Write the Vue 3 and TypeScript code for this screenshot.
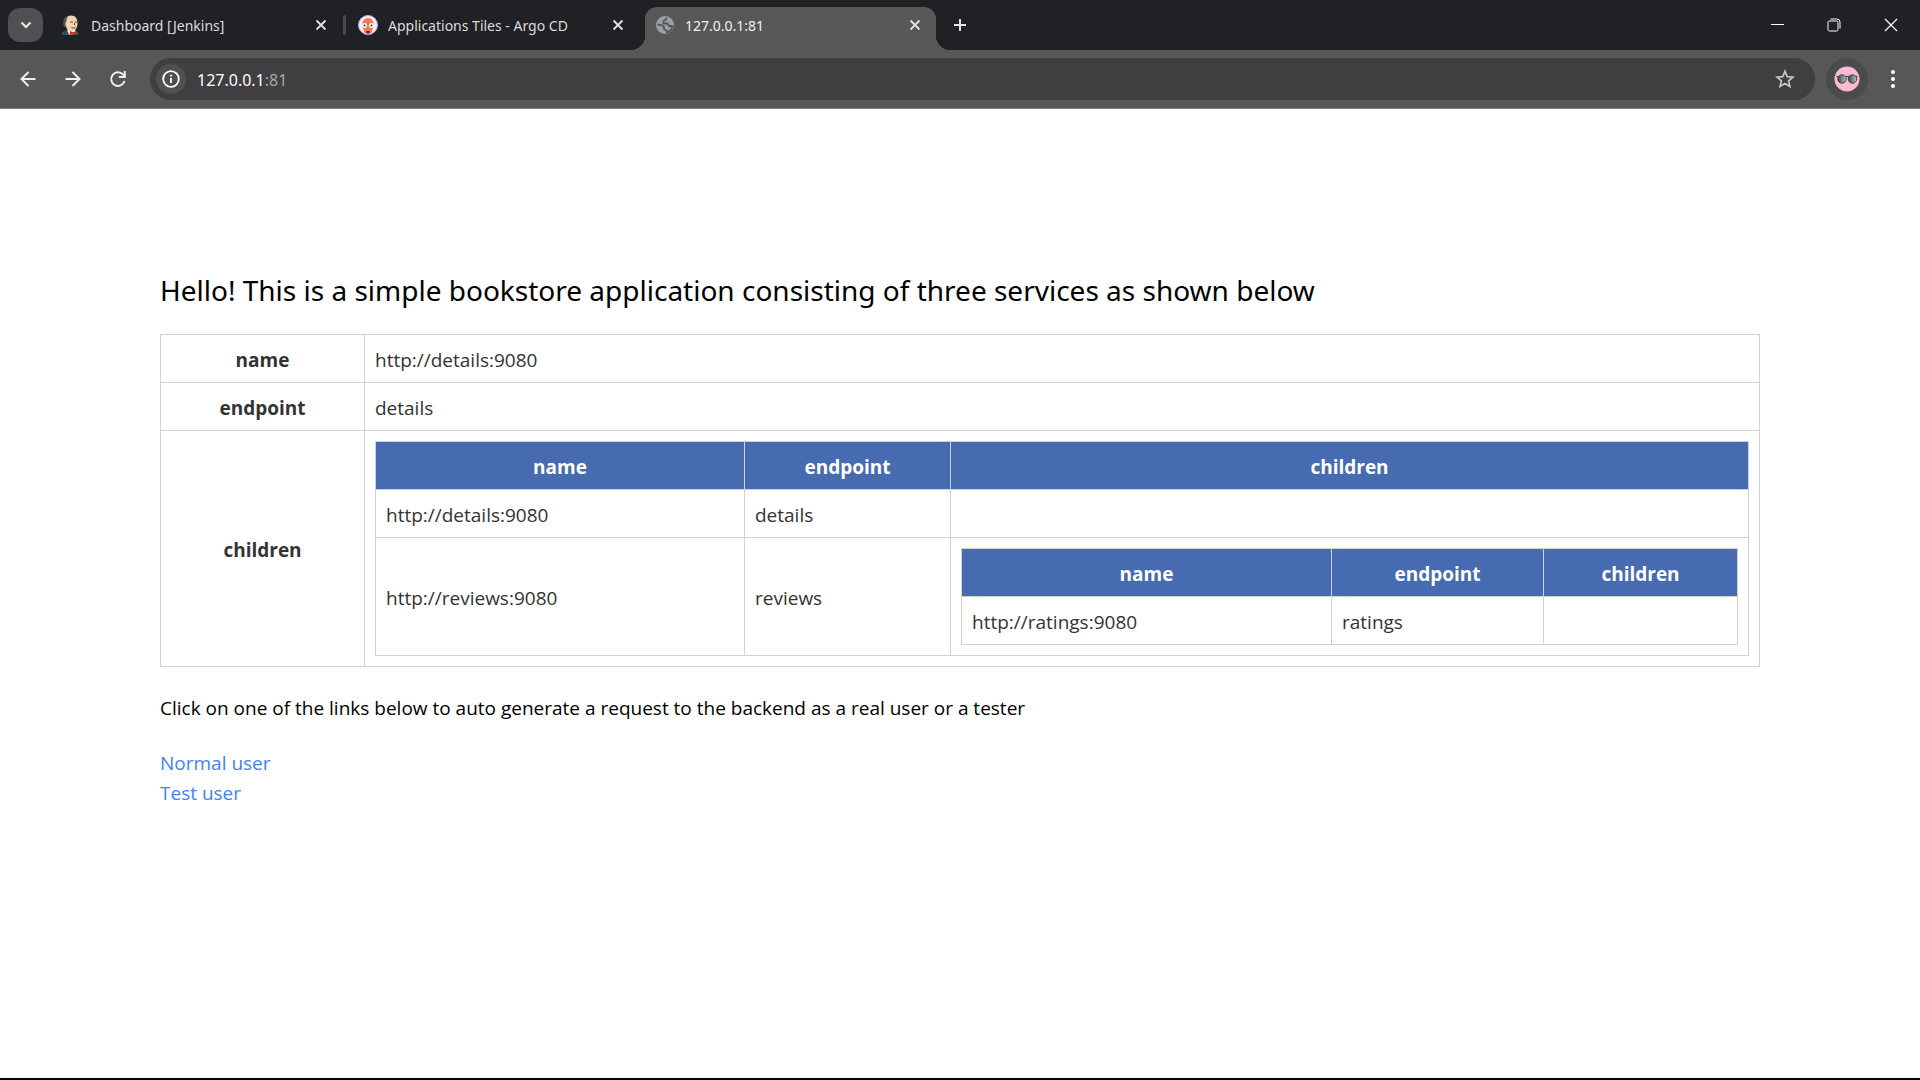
<script setup lang="ts">
interface Tab {
  title: string
  icon: 'jenkins' | 'argo' | 'globe'
  active: boolean
}

interface Service {
  name: string
  endpoint: string
  children: Service[]
}

const tabs: Tab[] = [
  { title: 'Dashboard [Jenkins]', icon: 'jenkins', active: false },
  { title: 'Applications Tiles - Argo CD', icon: 'argo', active: false },
  { title: '127.0.0.1:81', icon: 'globe', active: true },
]

const product: Service = {
  name: 'http://details:9080',
  endpoint: 'details',
  children: [
    { name: 'http://details:9080', endpoint: 'details', children: [] },
    {
      name: 'http://reviews:9080',
      endpoint: 'reviews',
      children: [{ name: 'http://ratings:9080', endpoint: 'ratings', children: [] }],
    },
  ],
}
</script>

<template>
  <div class="window">
    <header class="tabstrip">
      <button class="search-tabs" type="button" aria-label="Search tabs">
        <svg width="12" height="12" viewBox="0 0 12 12"><path d="M1.5 3.5 6 8l4.5-4.5" fill="none" stroke="#e8e8e8" stroke-width="2.2" /></svg>
      </button>
      <nav class="tabs">
        <div v-for="tab in tabs" :key="tab.title" class="tab" :class="{ active: tab.active }">
          <svg v-if="tab.icon === 'jenkins'" class="favicon" viewBox="0 0 20 20">
            <path d="M1 20v-2.500L5 15.500h10l2.500 2V20Z" fill="#335061" />
            <path d="M6 14.500h8l.5 3-3.500 2H8Z" fill="#f4f2ec" />
            <path d="M3 8c0-4.500 2.500-7.500 7-7.500s6.500 3 6.500 7.500c0 5-2 8-5.500 8s-5.500-2-6-4.500C3.500 11 3 10 3 8Z" fill="#efd3ae" />
            <path d="M7.500 1C4 1.500 2 4.500 2.200 8c0 1.500.6 3 1.500 4l1-1.500L4.500 8l1-2V4Z" fill="#5c5450" />
            <path d="M16 4.500c.8 1 1 2.500.8 4" fill="none" stroke="#5c5450" />
            <path d="M9.500 7h2.500m2 0h2M10.500 12.500c1.500.8 3 .8 4-.2M13.500 8v2" fill="none" stroke="#4a3a32" stroke-width="1" />
            <path d="m9 16 3 1.200 3.500-1.200v3.800L12 18.800 9 20Z" fill="#e02020" />
          </svg>
          <svg v-else-if="tab.icon === 'argo'" class="favicon" viewBox="0 0 20 20">
            <circle cx="10" cy="10" r="9.500" fill="#f3f0fa" stroke="#b9b1dc" />
            <path d="M4.200 9a5.800 6 0 0 1 11.600 0c0 3-1.200 4.500-1.500 6.500l-1 3H6.700l-1-3C5.400 13.500 4.200 12 4.200 9Z" fill="#ef7b4d" />
            <circle cx="6.500" cy="10.500" r="2.500" fill="#fff" />
            <circle cx="13.500" cy="10.500" r="2.500" fill="#fff" />
            <circle cx="6.500" cy="10.500" r=".9" fill="#222" />
            <circle cx="13.500" cy="10.500" r=".9" fill="#222" />
            <path d="M8.500 16h3l-.3 2.500H8.800Z" fill="#3a2a2a" />
          </svg>
          <svg v-else class="favicon" viewBox="0 0 20 20">
            <circle cx="10" cy="10" r="9" fill="#9aa0a6" />
            <path d="M11.500 2.500 11 4.500 8.500 6v2.500h4l1.500 2.500h3.500c-.5 3-2.500 5.500-5.700 6.500l.2-2.500M2.500 9.500l4 .5 2.500 2v2l2 1.500" fill="none" stroke="#575757" stroke-width="1.800" />
          </svg>
          <span class="tab-title">{{ tab.title }}</span>
          <button class="tab-close" type="button" aria-label="Close tab">
            <svg width="12" height="12" viewBox="0 0 12 12"><path d="m1.500 1.500 9 9m0-9-9 9" stroke="#e3e3e3" stroke-width="1.800" /></svg>
          </button>
        </div>
      </nav>
      <button class="new-tab" type="button" aria-label="New tab">
        <svg width="14" height="14" viewBox="0 0 14 14"><path d="M7 1v12M1 7h12" stroke="#e3e3e3" stroke-width="2" /></svg>
      </button>
      <div class="window-controls">
        <button type="button" aria-label="Minimize">
          <svg width="14" height="14" viewBox="0 0 14 14"><path d="M1 6.500h13" stroke="#fff" /></svg>
        </button>
        <button type="button" aria-label="Restore">
          <svg width="14" height="14" viewBox="0 0 14 14" fill="none" stroke="#fff"><rect x="1" y="3" width="10" height="10" rx="1.500" /><path d="M3.500 1H10a3 3 0 0 1 3 3v6.500" /></svg>
        </button>
        <button type="button" aria-label="Close">
          <svg width="14" height="14" viewBox="0 0 14 14"><path d="m1 1 12 12M13 1 1 13" stroke="#fff" stroke-width="1.200" /></svg>
        </button>
      </div>
    </header>

    <div class="toolbar">
      <button class="nav-button" type="button" aria-label="Back">
        <svg width="20" height="20" viewBox="0 0 20 20"><path d="M17.500 10H4M10.500 3l-7 7 7 7" fill="none" stroke="#eee" stroke-width="2" /></svg>
      </button>
      <button class="nav-button" type="button" aria-label="Forward">
        <svg width="20" height="20" viewBox="0 0 20 20"><path d="M2.500 10H16M9.500 3l7 7-7 7" fill="none" stroke="#eee" stroke-width="2" /></svg>
      </button>
      <button class="nav-button" type="button" aria-label="Reload">
        <svg width="20" height="20" viewBox="0 0 20 20"><path d="M16.500 12a6.800 6.800 0 1 1-1.300-6.300L17 8" fill="none" stroke="#eee" stroke-width="2" /><path d="M17.800 2v7h-7V7h5V2Z" fill="#eee" /></svg>
      </button>
      <div class="omnibox">
        <button class="site-info" type="button" aria-label="View site information">
          <svg width="18" height="18" viewBox="0 0 18 18"><circle cx="9" cy="9" r="7.800" fill="none" stroke="#fff" stroke-width="1.800" /><path d="M9 8v5M9 4.800v1.800" stroke="#fff" stroke-width="1.800" /></svg>
        </button>
        <a class="url" href="#">127.0.0.1<span class="port">:81</span></a>
        <button class="bookmark" type="button" aria-label="Bookmark this tab">
          <svg width="20" height="20" viewBox="0 0 20 20"><path d="m10 2.300 2.200 5.300 5.800.5-4.400 3.800 1.300 5.600-4.900-3-4.900 3 1.300-5.600L2 8.100l5.800-.5Z" fill="none" stroke="#c7c7c7" stroke-width="1.700" /></svg>
        </button>
      </div>
      <button class="profile" type="button" aria-label="Profile">
        <svg width="26" height="26" viewBox="0 0 26 26">
          <defs><linearGradient id="lens" x1="0" x2="1"><stop offset="0" stop-color="#33424a" /><stop offset="1" stop-color="#b9c6c9" /></linearGradient></defs>
          <circle cx="13" cy="13" r="12.500" fill="#f8bbd0" />
          <path d="M2.500 10.500h21" stroke="#4a4044" stroke-width="1.200" />
          <circle cx="8" cy="13" r="4.200" fill="url(#lens)" stroke="#4a4044" />
          <circle cx="18.500" cy="13" r="4.200" fill="url(#lens)" stroke="#4a4044" />
        </svg>
      </button>
      <button class="menu" type="button" aria-label="Menu">
        <svg width="6" height="20" viewBox="0 0 6 20" fill="#fff"><circle cx="3" cy="3" r="2" /><circle cx="3" cy="10" r="2" /><circle cx="3" cy="17" r="2" /></svg>
      </button>
    </div>

    <main class="page">
      <h1>Hello! This is a simple bookstore application consisting of three services as shown below</h1>

      <table class="services">
        <colgroup><col class="col-label" /><col /></colgroup>
        <tbody>
          <tr><th scope="row">name</th><td>{{ product.name }}</td></tr>
          <tr><th scope="row">endpoint</th><td>{{ product.endpoint }}</td></tr>
          <tr>
            <th scope="row">children</th>
            <td class="nested">
              <table>
                <colgroup><col class="col-name" /><col class="col-endpoint" /><col /></colgroup>
                <thead>
                  <tr><th scope="col">name</th><th scope="col">endpoint</th><th scope="col">children</th></tr>
                </thead>
                <tbody>
                  <tr v-for="child in product.children" :key="child.name">
                    <td>{{ child.name }}</td>
                    <td>{{ child.endpoint }}</td>
                    <td class="nested">
                      <table v-if="child.children.length">
                        <colgroup><col class="col-name-inner" /><col class="col-endpoint-inner" /><col /></colgroup>
                        <thead>
                          <tr><th scope="col">name</th><th scope="col">endpoint</th><th scope="col">children</th></tr>
                        </thead>
                        <tbody>
                          <tr v-for="leaf in child.children" :key="leaf.name">
                            <td>{{ leaf.name }}</td>
                            <td>{{ leaf.endpoint }}</td>
                            <td></td>
                          </tr>
                        </tbody>
                      </table>
                    </td>
                  </tr>
                </tbody>
              </table>
            </td>
          </tr>
        </tbody>
      </table>

      <p>Click on one of the links below to auto generate a request to the backend as a real user or a tester</p>
      <ul>
        <li><a href="#normal">Normal user</a></li>
        <li><a href="#test">Test user</a></li>
      </ul>
    </main>
  </div>
</template>

<style>
body {
  margin: 0;
}
</style>

<style scoped>
.window {
  box-sizing: border-box;
  display: flex;
  flex-direction: column;
  min-height: 100vh;
  border-bottom: 2px solid #000;
  background: #fff;
  color: #000;
  font-family: "Noto Sans", "Open Sans", sans-serif;
}

button {
  display: flex;
  align-items: center;
  justify-content: center;
  flex: none;
  padding: 0;
  border: 0;
  background: none;
}

.tabstrip {
  display: flex;
  align-items: center;
  height: 50px;
  padding: 0 1px 0 8px;
  background: #202124;
}

.search-tabs {
  width: 35px;
  height: 34px;
  border-radius: 12px;
  background: #524f52;
}

.tabs {
  display: flex;
  align-self: stretch;
  gap: 6px;
  margin-left: 8px;
}

.tab {
  position: relative;
  box-sizing: border-box;
  display: flex;
  align-items: center;
  width: 291px;
  height: 43px;
  margin-top: 7px;
  padding: 0 14px 7px 10px;
  border-radius: 12px 12px 0 0;
  color: #dcdcdc;
  font-size: 14px;
  line-height: 20px;
}

.tab:first-child::after {
  content: "";
  position: absolute;
  top: 8px;
  right: -4px;
  width: 3px;
  height: 20px;
  border-radius: 2px;
  background: #4c494c;
}

.tab.active {
  background: #575757;
  color: #f1f1f1;
}

.tab.active::before,
.tab.active::after {
  content: "";
  position: absolute;
  bottom: 0;
  width: 14px;
  height: 14px;
}

.tab.active::before {
  right: 100%;
  background: radial-gradient(circle at 0 0, transparent 14px, #575757 14px);
}

.tab.active::after {
  left: 100%;
  background: radial-gradient(circle at 100% 0, transparent 14px, #575757 14px);
}

.favicon {
  flex: none;
  width: 20px;
  height: 20px;
}

.tab-title {
  flex: 1;
  margin-left: 10px;
  padding-top: 2px;
  overflow: hidden;
  white-space: nowrap;
}

.tab-close {
  width: 14px;
  height: 20px;
}

.new-tab {
  width: 34px;
  height: 34px;
  margin-left: 7px;
}

.window-controls {
  display: flex;
  align-self: stretch;
  margin-left: auto;
}

.window-controls button {
  width: 57px;
}

.toolbar {
  box-sizing: border-box;
  display: flex;
  align-items: center;
  height: 59px;
  padding: 0 17px 0 5px;
  border-bottom: 1px solid #7d797d;
  background: #575757;
}

.nav-button {
  width: 45px;
  height: 42px;
}

.omnibox {
  box-sizing: border-box;
  display: flex;
  flex: 1;
  align-items: center;
  height: 42px;
  margin-left: 10px;
  padding: 0 20px 0 6px;
  border-radius: 21px;
  background: #413e41;
}

.site-info {
  width: 30px;
  height: 30px;
  border-radius: 50%;
  background: #524f52;
}

.url {
  flex: 1;
  margin-left: 11px;
  padding-top: 1px;
  color: #fff;
  font-size: 16px;
  line-height: 24px;
  text-decoration: none;
}

.port {
  color: #a3a7ab;
}

.profile {
  width: 42px;
  height: 42px;
  margin-left: 11px;
  border-radius: 50%;
  background: #4d4a4d;
}

.menu {
  width: 20px;
  height: 42px;
  margin-left: 15px;
}

.page {
  padding: 163px 160px 0;
  font-family: "Open Sans", "Noto Sans", sans-serif;
  font-size: 19px;
  line-height: 30px;
}

h1 {
  margin: 0 0 26px;
  font-family: "Noto Sans", "Open Sans", sans-serif;
  font-size: 28px;
  font-weight: 400;
  line-height: 36px;
}

table {
  width: 100%;
  border-collapse: collapse;
  table-layout: fixed;
  color: #333;
  line-height: 27px;
}

th,
td {
  padding: 12px 10px 8px;
  border: 1px solid #d1d1d1;
  text-align: left;
}

td.nested {
  padding: 10px;
}

th {
  font-weight: 700;
  text-align: center;
}

thead th {
  background: #466bb0;
  color: #fff;
}

.col-label {
  width: 204px;
}

.col-name {
  width: 369px;
}

.col-name-inner {
  width: 370px;
}

.col-endpoint {
  width: 206px;
}

.col-endpoint-inner {
  width: 212px;
}

p {
  margin: 26px 0 25px;
}

ul {
  margin: 0;
  padding: 0;
  list-style: none;
}

.page a {
  color: #4580f6;
  text-decoration: none;
}
</style>
